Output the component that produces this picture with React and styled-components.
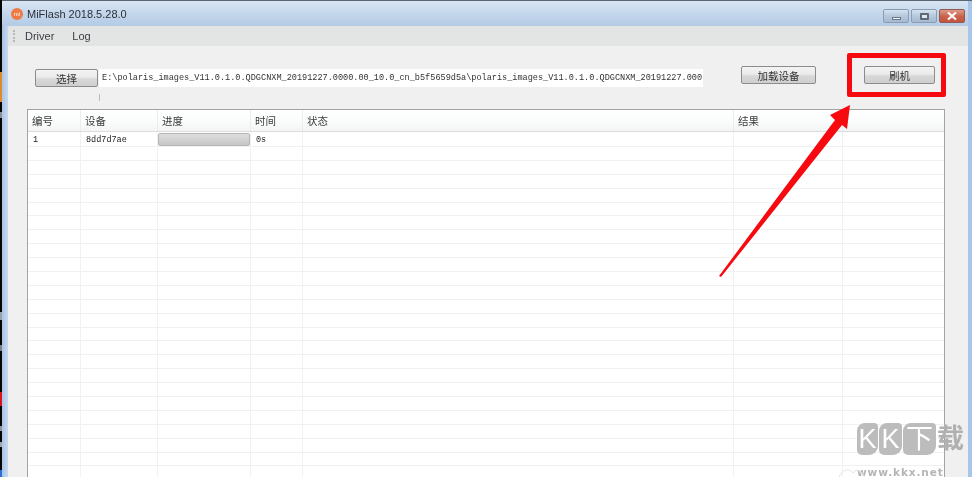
import React from "react"
import styled, { createGlobalStyle } from "styled-components"

const columns = [
  { label: "编号", width: 53 },
  { label: "设备", width: 77 },
  { label: "进度", width: 93 },
  { label: "时间", width: 52 },
  { label: "状态", width: 431 },
  { label: "结果", width: 109 },
  { label: "", width: 103 },
]

const emptyRows = Array.from({ length: 24 })

const App = () => (
  <Page>
    <GlobalStyle />
    <Desktop>
      <Blip $top={72} $height={30} $color="#e08a2a" />
      <Blip $top={112} $height={6} $color="#8a8f96" />
      <Blip $top={312} $height={8} $color="#9aa0a8" />
      <Blip $top={345} $height={6} $color="#7d8288" />
      <Blip $top={392} $height={14} $color="#d8141c" />
      <Blip $top={426} $height={5} $color="#90959c" />
      <Blip $top={442} $height={5} $color="#a0a5ac" />
      <Blip $top={470} $height={7} $color="#2a6fd8" />
    </Desktop>
    <Window>
      <TitleBar>
        <AppIcon>mi</AppIcon>
        <TitleText>MiFlash 2018.5.28.0</TitleText>
        <WindowButtons>
          <WindowButton>
            <MinimizeGlyph />
          </WindowButton>
          <WindowButton>
            <MaximizeGlyph />
          </WindowButton>
          <CloseButton>
            <svg width="12" height="10" viewBox="0 0 12 10">
              <path d="M2 1.5 L10 8.5 M10 1.5 L2 8.5" stroke="#fff" strokeWidth="2.2" />
            </svg>
          </CloseButton>
        </WindowButtons>
      </TitleBar>
      <MenuBar>
        <Grip />
        <MenuItem>Driver</MenuItem>
        <MenuItem>Log</MenuItem>
      </MenuBar>
      <Body>
        <Toolbar>
          <PathGroup>
            <Button $width={63}>选择</Button>
            <PathField>
              E:\polaris_images_V11.0.1.0.QDGCNXM_20191227.0000.00_10.0_cn_b5f5659d5a\polaris_images_V11.0.1.0.QDGCNXM_20191227.000
            </PathField>
          </PathGroup>
          <LoadButton $width={75}>加载设备</LoadButton>
          <FlashButton $width={71}>刷机</FlashButton>
        </Toolbar>
        <TickRow>
          <Tick />
        </TickRow>
        <Table>
          <HeaderRow>
            {columns.map((col, i) => (
              <HeaderCell key={i} $width={col.width}>
                {col.label}
              </HeaderCell>
            ))}
          </HeaderRow>
          <FirstRow>
            <Cell $width={53}>1</Cell>
            <Cell $width={77}>8dd7d7ae</Cell>
            <Cell $width={93}>
              <Progress />
            </Cell>
            <Cell $width={52}>0s</Cell>
            <Cell $width={431} />
            <Cell $width={109} />
            <Cell $width={103} />
          </FirstRow>
          {emptyRows.map((_, r) => (
            <Row key={r}>
              {columns.map((col, i) => (
                <Cell key={i} $width={col.width} />
              ))}
            </Row>
          ))}
        </Table>
      </Body>
    </Window>
    <RightEdge />

    <Highlight />
    <Arrow width="972" height="477" viewBox="0 0 972 477">
      <path
        d="M719 276 L835 120 L830 115 L850 105 L847 129 L842 125 L721 277 Z"
        fill="#f60a10"
      />
    </Arrow>
    <Watermark>
      <Swirl width="30" height="14" viewBox="0 0 30 14">
        <path d="M2 14 C3 5 12 2 16 8 C19 3 26 5 28 14" fill="none" stroke="#e4e4e4" strokeWidth="1" />
      </Swirl>
      <BadgeRow>
        <Badge $width={21}>K</Badge>
        <Badge $width={23}>K</Badge>
        <Badge $width={33}>下</Badge>
        <LastBadge $width={27}>载</LastBadge>
      </BadgeRow>
      <WatermarkUrl>www.kkx.net</WatermarkUrl>
    </Watermark>
  </Page>
)

export default App

const GlobalStyle = createGlobalStyle`
  html, body {
    margin: 0;
    padding: 0;
    background: #000;
  }
`

const cjk = `"Liberation Sans", "Noto Sans CJK SC", sans-serif`
const mono = `"Liberation Mono", "Noto Sans CJK SC", monospace`

const Page = styled.div`
  position: relative;
  display: flex;
  width: 972px;
  height: 477px;
  overflow: hidden;
  font-family: ${cjk};
  color: #333;
  filter: blur(0.35px);
`

const Desktop = styled.div`
  position: relative;
  flex: 0 0 2px;
  background: #050505;
`

const Blip = styled.div`
  position: absolute;
  left: 0;
  top: ${(p) => p.$top}px;
  width: 2px;
  height: ${(p) => p.$height}px;
  background: ${(p) => p.$color};
`

const Window = styled.div`
  flex: 1;
  display: flex;
  flex-direction: column;
  min-width: 0;
  border-top: 1px solid #59646e;
  background: linear-gradient(90deg, #a9c4e6 0, #c6d9f0 6px);
`

const TitleBar = styled.div`
  flex: 0 0 25px;
  display: flex;
  align-items: center;
  padding-left: 9px;
  background: linear-gradient(180deg, #d9e6f4 0%, #c2d5eb 55%, #b4cbe5 100%);
`

const AppIcon = styled.div`
  width: 12px;
  height: 12px;
  border-radius: 50%;
  background: #ee7a45;
  color: #fff;
  font-size: 6px;
  line-height: 12px;
  text-align: center;
`

const TitleText = styled.div`
  margin-left: 4px;
  font-size: 11px;
  color: #2c3138;
`

const WindowButtons = styled.div`
  margin-left: auto;
  margin-right: 7px;
  display: flex;
  gap: 2px;
  align-self: flex-start;
  margin-top: 8px;
`

const WindowButton = styled.div`
  box-sizing: border-box;
  width: 26px;
  height: 14px;
  display: flex;
  align-items: center;
  justify-content: center;
  border: 1px solid #8a9bb2;
  border-radius: 2px;
  background: linear-gradient(180deg, #d6e2f0 0%, #b6c8dd 50%, #a5bad3 100%);
`

const CloseButton = styled(WindowButton)`
  border-color: #8f5a50;
  background: linear-gradient(180deg, #dd9a88 0%, #c9604a 55%, #c4553f 100%);
`

const MinimizeGlyph = styled.div`
  width: 7px;
  height: 1px;
  margin-top: 5px;
  background: #f4f7fb;
  border: 1px solid #6a7686;
`

const MaximizeGlyph = styled.div`
  width: 5px;
  height: 3px;
  background: #dfe7f0;
  border: 2px solid #5e6a7a;
  border-radius: 1px;
`

const MenuBar = styled.div`
  flex: 0 0 20px;
  display: flex;
  align-items: center;
  margin-left: 6px;
  padding-left: 5px;
  background: #e3e5e5;
`

const Grip = styled.div`
  width: 2px;
  height: 12px;
  margin-right: 8px;
  border-left: 2px dotted #b8b8b8;
`

const MenuItem = styled.div`
  font-size: 11px;
  color: #3a3d42;
  margin-right: 18px;
`

const Body = styled.div`
  flex: 1;
  display: flex;
  flex-direction: column;
  min-height: 0;
  margin-left: 6px;
  margin-right: 4px;
  padding: 20px 23px 0 19px;
  background: #f0f0f0;
`

const Toolbar = styled.div`
  display: flex;
  align-items: flex-start;
`

const PathGroup = styled.div`
  display: flex;
  align-items: center;
  gap: 1px;
  margin: 3px 0 0 8px;
`

const Button = styled.div`
  box-sizing: border-box;
  width: ${(p) => p.$width}px;
  height: 18px;
  display: flex;
  align-items: center;
  justify-content: center;
  border: 1px solid #8c8c8c;
  border-radius: 2px;
  background: linear-gradient(180deg, #f3f3f3 0%, #ebebeb 45%, #d8d8d8 55%, #cfcfcf 100%);
  font-size: 10.5px;
  color: #333;
`

const LoadButton = styled(Button)`
  margin-left: 38px;
`

const FlashButton = styled(Button)`
  margin-left: 48px;
`

const PathField = styled.div`
  box-sizing: border-box;
  width: 604px;
  height: 18px;
  padding-left: 3px;
  background: #fff;
  font-family: ${mono};
  font-size: 8.55px;
  line-height: 18px;
  color: #333;
  white-space: nowrap;
  overflow: hidden;
`

const TickRow = styled.div`
  height: 22px;
  padding-left: 72px;
`

const Tick = styled.div`
  width: 1px;
  height: 7px;
  margin-top: 7px;
  background: #bdbdbd;
`

const Table = styled.div`
  flex: 1;
  min-height: 0;
  overflow: hidden;
  border: 1px solid #a3a3a3;
  border-bottom: 0;
  background: #fff;
`

const HeaderRow = styled.div`
  display: flex;
  height: 21px;
  border-bottom: 1px solid #dcdcdc;
  background: linear-gradient(180deg, #fff 0%, #fbfcfc 50%, #f3f4f5 100%);
`

const Row = styled.div`
  display: flex;
  height: 13.9px;
  box-sizing: border-box;
  border-bottom: 1px solid #f1f1f1;
`

const FirstRow = styled(Row)`
  height: 15px;
`

const HeaderCell = styled.div`
  box-sizing: border-box;
  flex: 0 0 ${(p) => p.$width}px;
  padding-left: 4px;
  border-right: 1px solid #ececec;
  font-size: 10.5px;
  line-height: 22px;
  color: #3c3c3c;
`

const Cell = styled.div`
  box-sizing: border-box;
  flex: 0 0 ${(p) => p.$width}px;
  padding-left: 5px;
  border-right: 1px solid #f1f1f1;
  font-family: ${mono};
  font-size: 8.5px;
  line-height: 16px;
  color: #222;
`

const Progress = styled.div`
  width: 92px;
  height: 13px;
  margin: 1px 0 0 -5px;
  box-sizing: border-box;
  border: 1px solid #b5b5b5;
  border-radius: 2px;
  background: linear-gradient(180deg, #dedede 0%, #d2d2d2 50%, #c6c6c6 100%);
`

const RightEdge = styled.div`
  position: absolute;
  top: 1px;
  bottom: 0;
  right: 0;
  width: 4px;
  background: #a9c6ea;
`

const Highlight = styled.div`
  position: absolute;
  left: 847px;
  top: 53px;
  width: 99px;
  height: 44px;
  box-sizing: border-box;
  border: 5px solid #f60a10;
  border-radius: 2px;
`

const Arrow = styled.svg`
  position: absolute;
  left: 0;
  top: 0;
  pointer-events: none;
`

const Watermark = styled.div`
  position: absolute;
  left: 857px;
  top: 423px;
  width: 115px;
`

const Swirl = styled.svg`
  position: absolute;
  left: -20px;
  top: 42px;
`

const BadgeRow = styled.div`
  display: flex;
  gap: 1px;
`

const Badge = styled.div`
  width: ${(p) => p.$width}px;
  height: 32px;
  border-radius: 8px 4px 9px 5px;
  background: #bcbcbc;
  color: #fff;
  font-family: "Liberation Sans", "Noto Sans CJK SC", sans-serif;
  font-size: 27px;
  line-height: 32px;
  text-align: center;
  overflow: hidden;
`

const LastBadge = styled(Badge)`
  background: transparent;
  color: #b0b0b0;
  font-weight: 700;
  overflow: visible;
`

const WatermarkUrl = styled.div`
  margin: 12px 0 0 0;
  font-family: "DejaVu Sans", sans-serif;
  font-size: 10.5px;
  font-weight: 700;
  letter-spacing: 0.9px;
  line-height: 10px;
  color: #b5b5b5;
`
